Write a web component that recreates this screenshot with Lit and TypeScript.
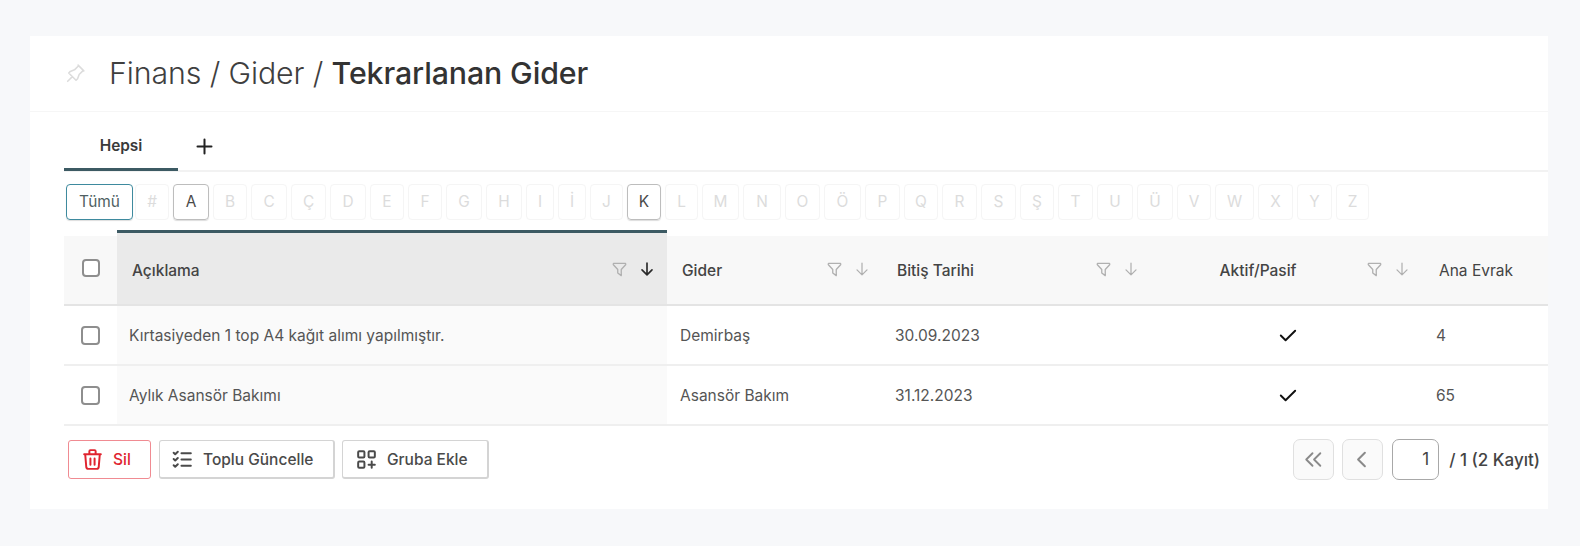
import { LitElement, html, css } from "lit";
import { customElement } from "lit/decorators.js";
import { styleMap } from "lit/directives/style-map.js";

const icon = (d: string, cls = "") => html`<svg class="ic ${cls}" viewBox="0 0 24 24" fill="none" stroke="currentColor" stroke-linecap="round" stroke-linejoin="round"><path d=${d}></path></svg>`;
const P = {
  pin: "M15 4.5l-4 4l-4 1.5l-1.5 1.5l7 7l1.5 -1.5l1.5 -4l4 -4M9 15l-4.5 4.5M14.5 4l5.5 5.5",
  filter: "M5.5 5h13a1 1 0 0 1 .5 1.5l-5 5.5v7l-4 -3v-4l-5 -5.5a1 1 0 0 1 .5 -1.5",
  down: "M12 5v14M18 13l-6 6M6 13l6 6",
  trash: "M4 7h16M10 11v6M14 11v6M5 7l1 12a2 2 0 0 0 2 2h8a2 2 0 0 0 2 -2l1 -12M9 7v-3a1 1 0 0 1 1 -1h4a1 1 0 0 1 1 1v3",
  list: "M3.5 5.5l1.5 1.5l2.5 -2.5M3.5 11.5l1.5 1.5l2.5 -2.5M3.5 17.5l1.5 1.5l2.5 -2.5M11 6h9M11 12h9M11 18h9",
  apps: "M5 4h4a1 1 0 0 1 1 1v4a1 1 0 0 1 -1 1h-4a1 1 0 0 1 -1 -1v-4a1 1 0 0 1 1 -1M15 4h4a1 1 0 0 1 1 1v4a1 1 0 0 1 -1 1h-4a1 1 0 0 1 -1 -1v-4a1 1 0 0 1 1 -1M5 14h4a1 1 0 0 1 1 1v4a1 1 0 0 1 -1 1h-4a1 1 0 0 1 -1 -1v-4a1 1 0 0 1 1 -1M14 17h6M17 14v6",
  first: "M12 6l-6 6l6 6M19.5 6l-6 6l6 6",
  prev: "M15 6l-6 6l6 6",
  check: "M5 12l5 5l10 -10",
  plus: "M12 4v16M4 12h16",
};

const LETTERS: [string, number][] = [
  ["#", 34], ["A", 36], ["B", 34], ["C", 36], ["Ç", 35], ["D", 36], ["E", 34], ["F", 34],
  ["G", 36], ["H", 36], ["I", 28], ["İ", 28], ["J", 33], ["K", 34], ["L", 33], ["M", 37],
  ["N", 38], ["O", 35], ["Ö", 37], ["P", 35], ["Q", 34], ["R", 35], ["S", 35], ["Ş", 34],
  ["T", 35], ["U", 36], ["Ü", 36], ["V", 34], ["W", 39], ["X", 35], ["Y", 35], ["Z", 33],
];
const ENABLED = new Set(["A", "K"]);

const COLUMNS = [
  { label: "Açıklama", cls: "active", sort: true },
  { label: "Gider", cls: "", sort: true },
  { label: "Bitiş Tarihi", cls: "", sort: true },
  { label: "Aktif/Pasif", cls: "center", sort: true },
  { label: "Ana Evrak", cls: "last", sort: false },
];
const ROWS = [
  ["Kırtasiyeden 1 top A4 kağıt alımı yapılmıştır.", "Demirbaş", "30.09.2023", "4"],
  ["Aylık Asansör Bakımı", "Asansör Bakım", "31.12.2023", "65"],
];

@customElement("app-root")
export class AppRoot extends LitElement {
  static styles = css`
    :host {
      display: block;
      width: 1580px;
      height: 546px;
      overflow: hidden;
      background: #f7f8fa;
      font-family: Inter, "Liberation Sans", sans-serif;
      color: #3c3c3c;
      box-sizing: border-box;
      padding: 36px 32px 37px 30px;
    }
    * { box-sizing: border-box; }
    .card { background: #fff; height: 473px; overflow: hidden; }
    .ic { display: block; flex: none; stroke-width: 1.5; }

    .head {
      height: 76px;
      border-bottom: 1px solid #f6f6f6;
      display: flex;
      align-items: center;
      padding-left: 33px;
      gap: 21px;
    }
    .pin { width: 25px; height: 25px; color: #dcdcdc; }
    .title { font-size: 30.3px; font-weight: 300; color: #3f3f3f; letter-spacing: -0.1px; margin-top: -2px; }
    .title b { font-weight: 500; color: #333; }

    .tabs {
      height: 60px;
      margin-left: 34px;
      border-bottom: 2px solid #f2f2f2;
      display: flex;
      align-items: stretch;
    }
    .tab {
      width: 114px;
      margin-bottom: -1px;
      border-bottom: 3px solid #3c5a63;
      display: flex;
      align-items: center;
      justify-content: center;
      font-size: 15.4px;
      font-weight: 600;
      padding-top: 10px;
      color: #3a3a3a;
    }
    .add { width: 21px; height: 21px; margin: 24px 0 0 16px; color: #222; }
    .add.ic { stroke-width: 2.3; }

    .letters {
      display: flex;
      gap: 4px;
      margin: 12px 0 0 36px;
      height: 36px;
    }
    .lt {
      border: 1px solid #f5f5f5;
      border-radius: 4px;
      font-size: 15.4px;
      line-height: 34px;
      text-align: center;
      color: #dcdcdc;
    }
    .lt.on { border-color: #bdbdbd; color: #4a4a4a; box-shadow: 0 1px 1px #ddd; }
    .lt.all { border-color: #3e8a9e; color: #4f5f63; width: 67px; margin-right: -2px; }

    .table {
      margin: 10px 0 0 34px;
      width: 1500px;
      display: grid;
      grid-template-columns: 53px 550px 215px 269px 271px 142px;
      font-size: 15.5px;
    }
    .th {
      height: 76px;
      padding-top: 6px;
      border-bottom: 2px solid #e4e4e4;
      display: flex;
      align-items: center;
      font-weight: 500;
      color: #444;
    }
    .th.box { background: #f8f8f8; background-clip: content-box; }
    .th > .in {
      flex: 1;
      height: 100%;
      background: #f8f8f8;
      display: flex;
      align-items: center;
      padding: 0 10px 0 15px;
      min-width: 0;
    }
    .th.active { padding-top: 0; }
    .th.active > .in {
      background: #eaeaea;
      border-top: 3px solid #3c5a63;
      padding-top: 3px;
    }
    .lab { flex: 1; }
    .th.center .lab { text-align: center; padding-right: 14px; }
    .th.last .lab { font-weight: 400; padding-left: 2px; }
    .fi { width: 21px; height: 21px; color: #b0b0b0; margin-top: -2px; }
    .ar { width: 20px; height: 20px; color: #b0b0b0; margin: -3px 0 0 7px; }
    .th.active .ar { color: #2a2a2a; }
    .th.active .ic.ar { stroke-width: 2; }

    .td {
      height: 60px;
      border-bottom: 2px solid #efefef;
      display: flex;
      align-items: center;
      padding: 1px 13px 0;
      color: #555;
    }
    .td.active { background: #fafafa; padding-left: 12px; }
    .td.center { justify-content: center; padding-left: 15px; }
    .td.center .ic { width: 23px; height: 23px; color: #111; stroke-width: 2; margin-top: -1px; }
    .td.last { padding-left: 14px; }
    .cb {
      width: 18px;
      height: 18px;
      border: 2px solid #8e8e8e;
      border-radius: 4px;
      margin-left: 18px;
      background: #fff;
    }
    .th .cb { margin-top: -4px; }
    .td .cb { width: 19px; height: 19px; margin: -1px 0 0 17px; }
    .th.box, .td.box { padding-left: 0; padding-right: 0; }

    .foot {
      display: flex;
      align-items: flex-start;
      justify-content: space-between;
      margin: 14px 8px 0 38px;
    }
    .left { display: flex; gap: 7px; }
    .btn {
      height: 39px;
      border: 1px solid #d4d4d4;
      border-bottom-width: 2px;
      border-right-width: 2px;
      border-radius: 3px;
      display: flex;
      align-items: center;
      font-size: 15.5px;
      font-weight: 500;
      color: #4a4a4a;
      background: #fff;
      padding-left: 10px;
      gap: 8px;
    }
    .btn .ic { width: 25px; height: 25px; stroke-width: 1.9; }
    .btn.del { width: 83px; margin-right: 1px; border: 1px solid #f08b92; color: #e0242f; padding-left: 11px; }
    .btn.up { width: 176px; }
    .btn.grp { width: 147px; padding-left: 11px; }
    .pager { display: flex; align-items: center; gap: 8px; margin-top: -1px; }
    .pg {
      width: 41px;
      height: 41px;
      border: 1px solid #e0e0e0;
      border-radius: 7px;
      background: #fafafa;
      display: flex;
      align-items: center;
      justify-content: center;
      color: #8a8a8a;
      padding-right: 3px;
    }
    .pg .ic { width: 25px; height: 25px; stroke-width: 1.8; }
    .pg .ic.pv { width: 27px; height: 27px; }
    .inp {
      width: 47px;
      height: 41px;
      margin-left: 1px;
      border: 1px solid #a8a8a8;
      border-radius: 7px;
      font-size: 17px;
      line-height: 39px;
      text-align: right;
      padding-right: 9px;
      color: #444;
    }
    .count { font-size: 17px; font-weight: 500; color: #444; margin-left: 2px; white-space: nowrap; }
  `;

  render() {
    return html`<div class="card">
      <div class="head">
        ${icon(P.pin, "pin")}
        <div class="title">Finans / Gider / <b>Tekrarlanan Gider</b></div>
      </div>
      <div class="tabs">
        <div class="tab">Hepsi</div>
        ${icon(P.plus, "add")}
      </div>
      <div class="letters">
        <div class="lt on all">Tümü</div>
        ${LETTERS.map(([l, w]) => html`<div class="lt ${ENABLED.has(l) ? "on" : ""}" style=${styleMap({ width: `${w}px` })}>${l}</div>`)}
      </div>
      <div class="table">
        <div class="th box"><span class="cb"></span></div>
        ${COLUMNS.map((c) => html`<div class="th ${c.cls}"><div class="in">
          <span class="lab">${c.label}</span>
          ${c.sort ? html`${icon(P.filter, "fi")}${icon(P.down, "ar")}` : ""}
        </div></div>`)}
        ${ROWS.map((r) => html`
          <div class="td box"><span class="cb"></span></div>
          <div class="td active">${r[0]}</div>
          <div class="td">${r[1]}</div>
          <div class="td">${r[2]}</div>
          <div class="td center">${icon(P.check)}</div>
          <div class="td last">${r[3]}</div>
        `)}
      </div>
      <div class="foot">
        <div class="left">
          <div class="btn del">${icon(P.trash)}Sil</div>
          <div class="btn up">${icon(P.list)}Toplu Güncelle</div>
          <div class="btn grp">${icon(P.apps)}Gruba Ekle</div>
        </div>
        <div class="pager">
          <div class="pg">${icon(P.first)}</div>
          <div class="pg">${icon(P.prev, "pv")}</div>
          <div class="inp">1</div>
          <div class="count">/ 1 (2 Kayıt)</div>
        </div>
      </div>
    </div>`;
  }
}
